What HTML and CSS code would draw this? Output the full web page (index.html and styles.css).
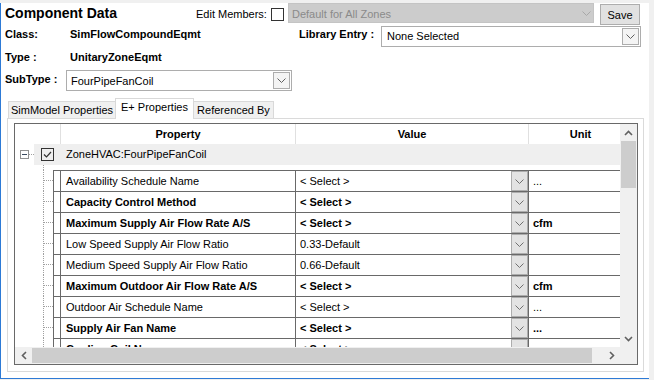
FILE: index.html
```html
<!DOCTYPE html>
<html lang="en">
<head>
  <meta charset="UTF-8">
  <meta name="viewport" content="width=device-width, initial-scale=1.0">
  <title>Component Data</title>
  <link rel="stylesheet" href="styles.css">
</head>
<body>
  <div class="window">
    <div class="head">
      <div class="line line-a">
        <div class="title">Component Data</div>
        <div class="edit-label">Edit Members:</div>
        <span class="check"></span>
        <div class="combo combo-off">
          <span class="combo-text">Default for All Zones</span>
          <span class="combo-arrow">
            <svg width="9" height="5" viewBox="0 0 9 5"><polyline points="0.5,0.5 4.5,4.5 8.5,0.5" fill="none" stroke="#a8a8a8" stroke-width="1"/></svg>
          </span>
        </div>
        <button class="save">Save</button>
      </div>

      <div class="line line-b">
        <div class="label w-class">Class:</div>
        <div class="value-text">SimFlowCompoundEqmt</div>
        <div class="label w-lib">Library Entry :</div>
        <div class="combo combo-lib">
          <span class="combo-text">None Selected</span>
          <span class="combo-btn">
            <svg width="9" height="5" viewBox="0 0 9 5"><polyline points="0.5,0.5 4.5,4.5 8.5,0.5" fill="none" stroke="#606060" stroke-width="1"/></svg>
          </span>
        </div>
      </div>

      <div class="line line-c">
        <div class="label w-class">Type :</div>
        <div class="value-text">UnitaryZoneEqmt</div>
      </div>

      <div class="line line-d">
        <div class="label w-sub">SubType :</div>
        <div class="combo combo-sub">
          <span class="combo-text">FourPipeFanCoil</span>
          <span class="combo-btn">
            <svg width="9" height="5" viewBox="0 0 9 5"><polyline points="0.5,0.5 4.5,4.5 8.5,0.5" fill="none" stroke="#606060" stroke-width="1"/></svg>
          </span>
        </div>
      </div>
    </div>

    <div class="tabs">
      <div class="tab tab-sim">SimModel Properties</div>
      <div class="tab tab-ep active">E+ Properties</div>
      <div class="tab tab-ref">Referenced By</div>
    </div>

    <div class="page">
      <div class="grid">
        <div class="view">
          <div class="hdr">
            <div class="hdr-pad"></div>
            <div class="hc hc-prop">Property</div>
            <div class="hc hc-val">Value</div>
            <div class="hc hc-unit">Unit</div>
          </div>

          <div class="group">
            <span class="expander"><span class="minus"></span></span>
            <span class="group-dots"></span>
            <div class="group-body">
              <span class="group-check">
                <svg width="11" height="11" viewBox="0 0 11 11"><polyline points="2,5.5 4.5,8 9,3" fill="none" stroke="#333" stroke-width="1.2"/></svg>
              </span>
              <span>ZoneHVAC:FourPipeFanCoil</span>
            </div>
          </div>

          <div class="gap"><div class="tree"><span class="stem"></span></div></div>

          <div class="prow">
            <div class="tree"><span class="tick"></span></div>
            <div class="cells">
              <div class="rh"></div>
              <div class="prop">Availability Schedule Name</div>
              <div class="val"><span class="val-text">&lt; Select &gt;</span><span class="dd"><svg width="9" height="5" viewBox="0 0 9 5"><polyline points="0.5,0.5 4.5,4.5 8.5,0.5" fill="none" stroke="#707070" stroke-width="1"/></svg></span></div>
              <div class="unit">...</div>
            </div>
          </div>

          <div class="prow bold">
            <div class="tree"><span class="tick"></span></div>
            <div class="cells">
              <div class="rh"></div>
              <div class="prop">Capacity Control Method</div>
              <div class="val"><span class="val-text">&lt; Select &gt;</span><span class="dd"><svg width="9" height="5" viewBox="0 0 9 5"><polyline points="0.5,0.5 4.5,4.5 8.5,0.5" fill="none" stroke="#707070" stroke-width="1"/></svg></span></div>
              <div class="unit"></div>
            </div>
          </div>

          <div class="prow bold">
            <div class="tree"><span class="tick"></span></div>
            <div class="cells">
              <div class="rh"></div>
              <div class="prop">Maximum Supply Air Flow Rate A/S</div>
              <div class="val"><span class="val-text">&lt; Select &gt;</span><span class="dd"><svg width="9" height="5" viewBox="0 0 9 5"><polyline points="0.5,0.5 4.5,4.5 8.5,0.5" fill="none" stroke="#707070" stroke-width="1"/></svg></span></div>
              <div class="unit">cfm</div>
            </div>
          </div>

          <div class="prow">
            <div class="tree"><span class="tick"></span></div>
            <div class="cells">
              <div class="rh"></div>
              <div class="prop">Low Speed Supply Air Flow Ratio</div>
              <div class="val"><span class="val-text">0.33-Default</span><span class="dd"><svg width="9" height="5" viewBox="0 0 9 5"><polyline points="0.5,0.5 4.5,4.5 8.5,0.5" fill="none" stroke="#707070" stroke-width="1"/></svg></span></div>
              <div class="unit"></div>
            </div>
          </div>

          <div class="prow">
            <div class="tree"><span class="tick"></span></div>
            <div class="cells">
              <div class="rh"></div>
              <div class="prop">Medium Speed Supply Air Flow Ratio</div>
              <div class="val"><span class="val-text">0.66-Default</span><span class="dd"><svg width="9" height="5" viewBox="0 0 9 5"><polyline points="0.5,0.5 4.5,4.5 8.5,0.5" fill="none" stroke="#707070" stroke-width="1"/></svg></span></div>
              <div class="unit"></div>
            </div>
          </div>

          <div class="prow bold">
            <div class="tree"><span class="tick"></span></div>
            <div class="cells">
              <div class="rh"></div>
              <div class="prop">Maximum Outdoor Air Flow Rate A/S</div>
              <div class="val"><span class="val-text">&lt; Select &gt;</span><span class="dd"><svg width="9" height="5" viewBox="0 0 9 5"><polyline points="0.5,0.5 4.5,4.5 8.5,0.5" fill="none" stroke="#707070" stroke-width="1"/></svg></span></div>
              <div class="unit">cfm</div>
            </div>
          </div>

          <div class="prow">
            <div class="tree"><span class="tick"></span></div>
            <div class="cells">
              <div class="rh"></div>
              <div class="prop">Outdoor Air Schedule Name</div>
              <div class="val"><span class="val-text">&lt; Select &gt;</span><span class="dd"><svg width="9" height="5" viewBox="0 0 9 5"><polyline points="0.5,0.5 4.5,4.5 8.5,0.5" fill="none" stroke="#707070" stroke-width="1"/></svg></span></div>
              <div class="unit">...</div>
            </div>
          </div>

          <div class="prow bold">
            <div class="tree"><span class="tick"></span></div>
            <div class="cells">
              <div class="rh"></div>
              <div class="prop">Supply Air Fan Name</div>
              <div class="val"><span class="val-text">&lt; Select &gt;</span><span class="dd"><svg width="9" height="5" viewBox="0 0 9 5"><polyline points="0.5,0.5 4.5,4.5 8.5,0.5" fill="none" stroke="#707070" stroke-width="1"/></svg></span></div>
              <div class="unit">...</div>
            </div>
          </div>

          <div class="prow bold">
            <div class="tree"><span class="tick"></span></div>
            <div class="cells">
              <div class="rh"></div>
              <div class="prop">Cooling Coil Name</div>
              <div class="val"><span class="val-text">&lt; Select &gt;</span><span class="dd"><svg width="9" height="5" viewBox="0 0 9 5"><polyline points="0.5,0.5 4.5,4.5 8.5,0.5" fill="none" stroke="#707070" stroke-width="1"/></svg></span></div>
              <div class="unit"></div>
            </div>
          </div>
        </div>

        <div class="vscroll">
          <span class="sb-arrow"><svg width="9" height="6" viewBox="0 0 9 6"><polyline points="1,5 4.5,1.5 8,5" fill="none" stroke="#606060" stroke-width="1.6"/></svg></span>
          <span class="v-thumb"></span>
          <span class="sb-fill"></span>
          <span class="sb-arrow"><svg width="9" height="6" viewBox="0 0 9 6"><polyline points="1,1 4.5,4.5 8,1" fill="none" stroke="#606060" stroke-width="1.6"/></svg></span>
        </div>

        <div class="hscroll">
          <span class="sb-arrow"><svg width="6" height="9" viewBox="0 0 6 9"><polyline points="5,1 1.5,4.5 5,8" fill="none" stroke="#606060" stroke-width="1.6"/></svg></span>
          <span class="h-thumb"></span>
          <span class="sb-fill"></span>
          <span class="sb-arrow"><svg width="6" height="9" viewBox="0 0 6 9"><polyline points="1,1 4.5,4.5 1,8" fill="none" stroke="#606060" stroke-width="1.6"/></svg></span>
        </div>

        <div class="corner"></div>
      </div>
    </div>
  </div>
</body>
</html>
```

FILE: styles.css
```css
body {
  margin: 0;
  background-color: #f0f0f0;
  font-family: "Liberation Sans", Arial, sans-serif;
  font-size: 11px;
  color: #000;
}
.window {
  margin-top: 3px;
  width: 648px;
  height: 375px;
  background-color: #fff;
  border-left: 1px solid #2d7ad6;
  border-bottom: 1px solid #2d7ad6;
  overflow: hidden;
}

/* header block */
.head {
  padding-left: 4px;
}
.line {
  display: flex;
  align-items: flex-start;
}
.line-a { height: 23px; }
.line-b { height: 21px; }
.line-c { height: 22px; }
.line-d { height: 23px; }
.title {
  width: 191px;
  font-size: 14px;
  font-weight: bold;
  line-height: 21px;
}
.edit-label {
  width: 75px;
  line-height: 23px;
}
.check {
  width: 13px;
  height: 13px;
  box-sizing: border-box;
  border: 1px solid #333;
  margin: 5px 4px 0 0;
}
.label {
  font-weight: bold;
  line-height: 16px;
  white-space: nowrap;
}
.line-c .label,
.line-d .label {
  line-height: 20px;
}
.w-class { width: 65px; }
.w-lib { width: 82px; }
.w-sub { width: 61px; }
.value-text {
  width: 229px;
  font-weight: bold;
  line-height: 16px;
}
.line-c .value-text {
  line-height: 20px;
}
.combo {
  display: flex;
  box-sizing: border-box;
  border: 1px solid #adadad;
  background-color: #fff;
}
.combo-text {
  flex: 1;
  padding-left: 4px;
  white-space: nowrap;
  overflow: hidden;
}
.combo-btn {
  width: 17px;
  height: 17px;
  box-sizing: border-box;
  border: 1px solid #adadad;
  background-color: #f4f4f4;
  margin: 1px;
  display: flex;
  align-items: center;
  justify-content: center;
}
.combo-off {
  width: 306px;
  height: 20px;
  background-color: #cccccc;
  border-color: #c4c4c4;
  color: #8a8a8a;
}
.combo-off .combo-text {
  line-height: 21px;
  padding-left: 3px;
}
.combo-arrow {
  width: 13px;
  height: 18px;
  display: flex;
  align-items: center;
  justify-content: center;
}
.save {
  margin: 1px 0 0 6px;
  width: 40px;
  height: 21px;
  padding: 0;
  font-family: inherit;
  font-size: 11px;
  color: #000;
  background-color: #e1e1e1;
  border: 1px solid #adadad;
}
.combo-lib {
  width: 260px;
  height: 21px;
}
.combo-lib .combo-text {
  line-height: 19px;
  padding-left: 5px;
}
.combo-sub {
  width: 226px;
  height: 21px;
  margin-top: 1px;
}
.combo-sub .combo-text {
  line-height: 21px;
}

/* tabs */
.tabs {
  display: flex;
  align-items: flex-end;
  height: 20px;
  margin: 6px 0 0 7px;
}
.tab {
  height: 17px;
  box-sizing: border-box;
  border: 1px solid #d9d9d9;
  border-bottom: none;
  background-color: #f0f0f0;
  line-height: 16px;
  text-align: center;
  white-space: nowrap;
}
.tab-sim { width: 108px; }
.tab-ep { width: 79px; margin-left: -1px; }
.tab-ref { width: 81px; margin-left: -1px; }
.tab.active {
  height: 21px;
  margin-bottom: -1px;
  line-height: 17px;
  background-color: #fff;
  position: relative;
  z-index: 1;
}
.page {
  margin-left: 6px;
  width: 637px;
  height: 254px;
  box-sizing: border-box;
  border: 1px solid #dadada;
  padding: 4px 5px 6px 6px;
}

/* property grid */
.grid {
  display: grid;
  grid-template-columns: 605px 17px;
  grid-template-rows: 223px 17px;
  width: 624px;
  height: 242px;
  box-sizing: border-box;
  border: 1px solid #696969;
}
.view {
  overflow: hidden;
  white-space: nowrap;
}
.hdr {
  display: flex;
  height: 20px;
  font-weight: bold;
  line-height: 20px;
}
.hdr-pad { width: 45px; flex-shrink: 0; }
.hc {
  flex-shrink: 0;
  box-sizing: border-box;
  border-left: 1px solid #e0e0e0;
  text-align: center;
}
.hc-prop { width: 235px; }
.hc-val { width: 233px; }
.hc-unit { width: 104px; }

.group {
  display: flex;
  align-items: center;
  height: 21px;
  padding-left: 5px;
}
.expander {
  width: 9px;
  height: 9px;
  box-sizing: border-box;
  border: 1px solid #919191;
  display: flex;
  align-items: center;
  justify-content: center;
}
.minus {
  width: 5px;
  height: 1px;
  background-color: #3a4a60;
}
.group-dots {
  width: 5px;
  border-top: 1px dotted #a0a0a0;
}
.group-body {
  flex: 1;
  align-self: stretch;
  background-color: #efefef;
  display: flex;
  align-items: center;
  padding-left: 7px;
  line-height: 21px;
}
.group-check {
  width: 13px;
  height: 13px;
  box-sizing: border-box;
  border: 1px solid #333;
  margin-right: 12px;
  display: flex;
  align-items: center;
  justify-content: center;
}

.gap {
  height: 5px;
  display: flex;
}
.tree {
  width: 38px;
  flex-shrink: 0;
  box-sizing: border-box;
  padding-left: 28px;
  display: flex;
}
.stem {
  border-left: 1px dotted #a0a0a0;
}
.tick {
  flex: 1;
  border-left: 1px dotted #a0a0a0;
  display: flex;
  align-items: center;
}
.tick::after {
  content: "";
  flex: 1;
  border-top: 1px dotted #a0a0a0;
}

.prow {
  display: flex;
  height: 21px;
}
.cells {
  display: flex;
  flex-shrink: 0;
  border-top: 1px solid #696969;
  border-left: 1px solid #696969;
  line-height: 20px;
}
.rh {
  width: 7px;
  box-sizing: border-box;
  border-right: 1px solid #696969;
}
.prop {
  width: 235px;
  box-sizing: border-box;
  border-right: 1px solid #696969;
  padding-left: 5px;
  overflow: hidden;
}
.val {
  width: 233px;
  box-sizing: border-box;
  border-right: 1px solid #696969;
  padding-left: 4px;
  display: flex;
}
.val-text {
  flex: 1;
}
.dd {
  width: 17px;
  box-sizing: border-box;
  border: 1px solid #adadad;
  background-color: #e3e3e3;
  display: flex;
  align-items: center;
  justify-content: center;
}
.unit {
  width: 104px;
  padding-left: 4px;
}
.bold {
  font-weight: bold;
}

/* scrollbars */
.vscroll {
  background-color: #f0f0f0;
  display: flex;
  flex-direction: column;
}
.hscroll {
  background-color: #f0f0f0;
  display: flex;
}
.corner {
  background-color: #f0f0f0;
}
.sb-arrow {
  width: 17px;
  height: 17px;
  flex-shrink: 0;
  display: flex;
  align-items: center;
  justify-content: center;
}
.sb-fill {
  flex: 1;
}
.v-thumb {
  height: 47px;
  margin: 0 1px;
  background-color: #cdcdcd;
}
.h-thumb {
  width: 560px;
  margin: 1px 0;
  background-color: #cdcdcd;
}
```
